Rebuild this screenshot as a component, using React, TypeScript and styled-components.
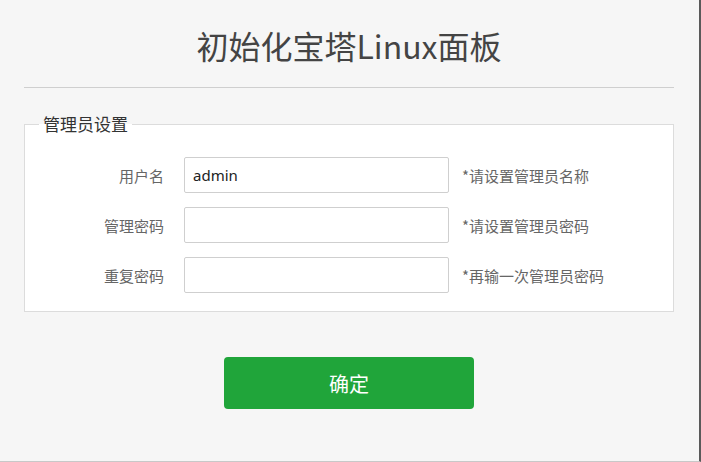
import React from "react";
import styled, { createGlobalStyle } from "styled-components";

const Global = createGlobalStyle`
  html, body { margin: 0; padding: 0; background: #f6f6f6; }
  body { font-family: "Microsoft YaHei", "Noto Sans CJK SC", "Noto Sans", sans-serif; }
  * { box-sizing: border-box; }
`;

const Page = styled.div`
  width: 701px;
  height: 462px;
  background: #f6f6f6;
  border-right: 2px solid #5a5a5a;
  border-bottom: 1px solid #c8c8c8;
  display: flex;
  flex-direction: column;
  padding: 0 25px 0 24px;
  overflow: hidden;
`;

const Title = styled.h1`
  margin: 0;
  height: 88px;
  display: flex;
  align-items: center;
  justify-content: center;
  padding-top: 2px;
  font-size: 32px;
  font-weight: 400;
  color: #444;
  border-bottom: 1px solid #cfcfcf;
`;

const Fieldset = styled.fieldset`
  margin: 26px 0 0 0;
  padding: 23px 0 18px 0;
  border: 1px solid #dcdcdc;
  background: #fff;
  display: flex;
  flex-direction: column;
  gap: 14px;
  min-width: 0;
`;

const Legend = styled.legend`
  margin-left: 14px;
  padding: 0 4px;
  font-size: 17px;
  color: #333;
  line-height: 20px;
`;

const Row = styled.div`
  display: flex;
  align-items: center;
  height: 36px;
`;

const Label = styled.label`
  width: 139px;
  text-align: right;
  font-size: 15px;
  color: #666;
`;

const Input = styled.input`
  margin-left: 20px;
  width: 265px;
  height: 36px;
  border: 1px solid #cfcfcf;
  border-radius: 2px;
  padding: 0 8px;
  font-family: "Noto Sans", "Liberation Sans", sans-serif;
  font-size: 15px;
  color: #222;
  outline: none;
  background: #fff;
`;

const Hint = styled.span`
  margin-left: 13px;
  font-size: 15px;
  color: #666;
`;

const Footer = styled.div`
  display: flex;
  justify-content: center;
  margin-top: 45px;
`;

const Button = styled.button`
  width: 250px;
  height: 52px;
  border: none;
  border-radius: 4px;
  background: #20a53a;
  color: #fff;
  font-family: inherit;
  font-size: 20px;
  cursor: pointer;
`;

const rows = [
  { label: "用户名", value: "admin", hint: "*请设置管理员名称", type: "text" },
  { label: "管理密码", value: "", hint: "*请设置管理员密码", type: "password" },
  { label: "重复密码", value: "", hint: "*再输一次管理员密码", type: "password" },
];

export default function App() {
  return (
    <>
      <Global />
      <Page>
        <Title>初始化宝塔Linux面板</Title>
        <Fieldset>
          <Legend>管理员设置</Legend>
          {rows.map((r) => (
            <Row key={r.label}>
              <Label>{r.label}</Label>
              <Input type={r.type} defaultValue={r.value} />
              <Hint>{r.hint}</Hint>
            </Row>
          ))}
        </Fieldset>
        <Footer>
          <Button>确定</Button>
        </Footer>
      </Page>
    </>
  );
}
